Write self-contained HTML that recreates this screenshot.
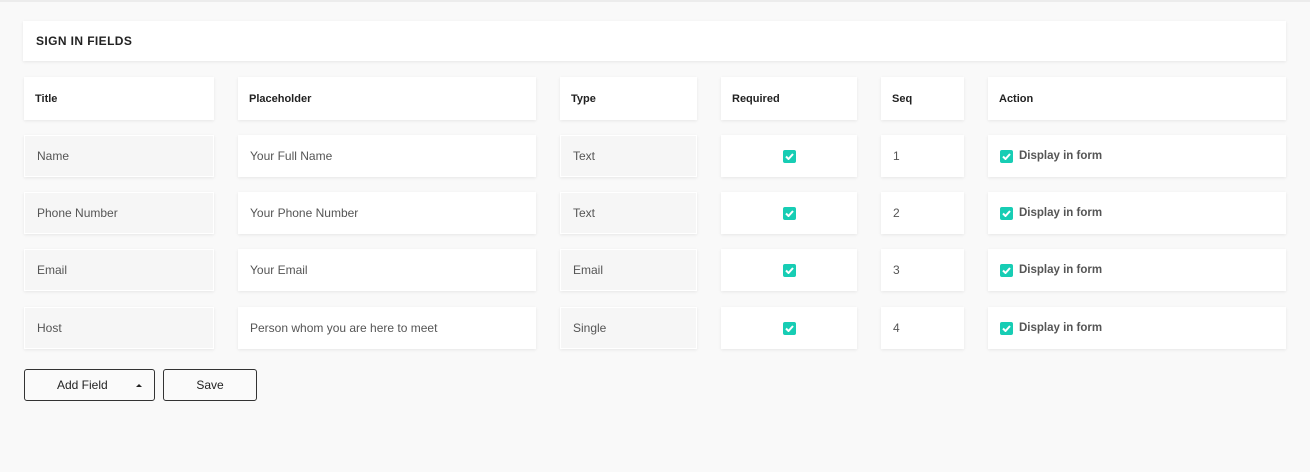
<!DOCTYPE html>
<html><head><style>
body{margin:0;width:1310px;height:472px;background:#f9f9f9;font-family:"Liberation Sans",sans-serif;position:relative;overflow:hidden}
.top{position:absolute;left:0;top:0;width:1310px;height:2px;background:#ececec}
.b{position:absolute;background:#fff;box-shadow:0 1px 3px rgba(0,0,0,.08);box-sizing:border-box;display:flex;align-items:center;font-size:12px;color:#555}
.g{background:#f6f6f6;border:1px solid #fff}
.h{font-weight:bold;font-size:11px;color:#222;padding-left:11px}
.c{padding-left:12px}
.ck{width:13px;height:13px;background:#17cdb4;border-radius:2px;display:inline-flex;align-items:center;justify-content:center}
.btn{position:absolute;top:369px;height:32px;border:1px solid #333;border-radius:3px;box-sizing:border-box;font-size:12px;color:#222;display:flex;align-items:center;background:#fafafa}
</style></head><body>
<div class="top"></div>
<div class="b" style="left:23px;top:21px;width:1263px;height:40px;font-weight:bold;font-size:12px;color:#222;padding-left:13px;letter-spacing:.4px">SIGN IN FIELDS</div>
<div id="t"></div>
<script>
var cols=[[24,190],[238,298],[560,137],[721,136],[881,83],[988,298]];
var hd=["Title","Placeholder","Type","Required","Seq","Action"];
var h='';
hd.forEach(function(t,i){h+='<div class="b h" style="left:'+cols[i][0]+'px;top:77px;width:'+cols[i][1]+'px;height:43px">'+t+'</div>'});
var rows=[["Name","Your Full Name","Text"],["Phone Number","Your Phone Number","Text"],["Email","Your Email","Email"],["Host","Person whom you are here to meet","Single"]];
var ys=[135,192,249,307];
var ck='<span class="ck"><svg width="9" height="7" viewBox="0 0 9 7"><path d="M1 3.5L3.5 6 8 1" stroke="#fff" stroke-width="2" fill="none"/></svg></span>';
rows.forEach(function(r,j){var y=ys[j];
function c(i,cls,txt,st){h+='<div class="b '+cls+'" style="left:'+cols[i][0]+'px;top:'+y+'px;width:'+cols[i][1]+'px;height:42px;'+(st||'')+'">'+txt+'</div>'}
c(0,'g c',r[0]);c(1,'c',r[1]);c(2,'g c',r[2]);c(3,'',ck,'justify-content:center');c(4,'c',String(j+1));
c(5,'',ck+'<span style="margin-left:6px;font-weight:bold;font-size:11.5px;color:#555">Display in form</span>','padding-left:12px');
});
document.getElementById('t').innerHTML=h;
</script>
<div class="btn" style="left:24px;width:131px;padding-left:32px">Add Field<span style="position:absolute;left:111px;top:14px;width:0;height:0;border-left:3px solid transparent;border-right:3px solid transparent;border-bottom:3px solid #222"></span></div>
<div class="btn" style="left:163px;width:94px;justify-content:center">Save</div>
</body></html>
